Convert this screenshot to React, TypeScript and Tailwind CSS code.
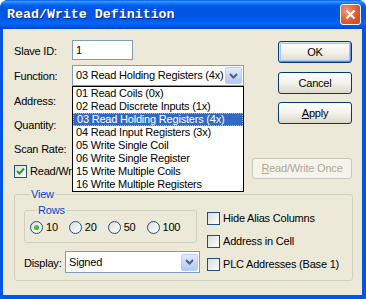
import React from 'react'

const functions = [
  '01 Read Coils (0x)',
  '02 Read Discrete Inputs (1x)',
  '03 Read Holding Registers (4x)',
  '04 Read Input Registers (3x)',
  '05 Write Single Coil',
  '06 Write Single Register',
  '15 Write Multiple Coils',
  '16 Write Multiple Registers',
]

function DropButton() {
  return (
    <div className="flex h-[17px] w-[17px] shrink-0 items-center justify-center rounded-[2px] border border-[#BACCF4] bg-gradient-to-b from-[#E2EBFE] to-[#B4C8F5]">
      <svg width="9" height="6" viewBox="0 0 9 6">
        <path d="M1 1 L4.5 4.5 L8 1" fill="none" stroke="#4D6185" strokeWidth="2" />
      </svg>
    </div>
  )
}

function Combo({ value, width, children }: { value: string; width: string; children?: React.ReactNode }) {
  return (
    <div className={`relative flex h-[21px] items-center justify-between border border-[#7F9DB9] bg-white pl-[3px] pr-[1px] ${width}`}>
      <span className="whitespace-nowrap">{value}</span>
      <DropButton />
      {children}
    </div>
  )
}

function Edit({ value = '', width = 'w-[61px]' }: { value?: string; width?: string }) {
  return <div className={`flex h-[20px] items-center border border-[#7F9DB9] bg-white pl-[3px] ${width}`}>{value}</div>
}

function XpButton({ children, def, disabled, className = '' }: { children: React.ReactNode; def?: boolean; disabled?: boolean; className?: string }) {
  if (disabled) {
    return (
      <div className={`flex h-[21px] items-center justify-center rounded-[3px] border border-[#C9C7BA] bg-[#F5F4EA] text-[#ACA899] ${className}`}>
        {children}
      </div>
    )
  }
  return (
    <div
      className={`flex h-[22px] items-center justify-center rounded-[3px] border border-[#003C74] bg-gradient-to-b from-white via-[#F3F2EC] to-[#DCD7CB] ${
        def ? 'shadow-[inset_1px_1px_0_#CEE7FF,inset_-1px_-1px_0_#6982EE,inset_0_0_0_2px_#A9C4F2]' : ''
      } ${className}`}
    >
      {children}
    </div>
  )
}

function Check({ checked, label }: { checked?: boolean; label: React.ReactNode }) {
  return (
    <div className="flex items-center gap-[3px] whitespace-nowrap">
      <div className="flex h-[13px] w-[13px] shrink-0 items-center justify-center border border-[#1C5180] bg-gradient-to-br from-[#DCDCD7] to-white">
        {checked && (
          <svg width="9" height="9" viewBox="0 0 9 9">
            <path d="M1 4 L3.5 6.5 L8 1.5" fill="none" stroke="#21A121" strokeWidth="2" />
          </svg>
        )}
      </div>
      <span>{label}</span>
    </div>
  )
}

function Radio({ checked, label }: { checked?: boolean; label: string }) {
  return (
    <div className="flex items-center gap-[3px]">
      <div className="flex h-[13px] w-[13px] shrink-0 items-center justify-center rounded-full border border-[#1C5180] bg-gradient-to-br from-[#DCDCD7] to-white">
        {checked && <div className="h-[5px] w-[5px] rounded-full bg-[radial-gradient(circle_at_40%_40%,#55D04E,#21A121)]" />}
      </div>
      <span>{label}</span>
    </div>
  )
}

export default function App() {
  return (
    <div className="h-[299px] w-[366px] bg-white">
      <div className="flex h-full w-full flex-col overflow-hidden rounded-t-[8px] bg-[#0055E5]">
        {/* Title bar */}
        <div className="flex h-[29px] items-center justify-between bg-[linear-gradient(to_bottom,#0058EE_0%,#3A93FF_5%,#288EFF_8%,#0E77FB_12%,#0262EE_18%,#0057E5_26%,#0055E3_50%,#005BF3_68%,#0365F8_80%,#0058E8_90%,#0046C0_100%)] pl-[7px] pr-[5px]">
          <span className="font-['Liberation_Mono',monospace] text-[13.3px] font-bold text-white [text-shadow:1px_1px_0_#0A2A8A]">
            Read/Write Definition
          </span>
          <div className="flex h-[21px] w-[21px] items-center justify-center rounded-[3px] border border-white bg-[radial-gradient(circle_at_30%_30%,#F0987A,#E05A31_55%,#C9431E)]">
            <svg width="11" height="11" viewBox="0 0 11 11">
              <path d="M1.5 1.5 L9.5 9.5 M9.5 1.5 L1.5 9.5" stroke="white" strokeWidth="2.2" />
            </svg>
          </div>
        </div>

        {/* Client area */}
        <div className="mb-[4px] ml-[3px] mr-[4px] flex-1 bg-[#ECE9D8] font-['Liberation_Sans',Arial,sans-serif] text-[11px] leading-[13px] tracking-[-0.2px] text-black">
          <div className="flex pl-[11px]">
            {/* Form fields */}
            <div className="flex w-[230px] flex-col">
              <div className="mt-[11px] flex h-[20px] items-center">
                <span className="w-[58px] pt-[2px]">Slave ID:</span>
                <Edit value="1" />
              </div>
              <div className="mt-[5px] flex h-[21px] items-center">
                <span className="w-[58px] pt-[2px]">Function:</span>
                <Combo value="03 Read Holding Registers (4x)" width="w-[172px]">
                  <div className="absolute left-[-1px] top-full z-10 mt-[1px] w-[172px] border border-black bg-white">
                    {functions.map((f, i) => (
                      <div
                        key={f}
                        className={`flex h-[13px] items-center whitespace-nowrap pl-[3px] ${
                          i === 2 ? 'border border-dotted border-[#E8B060] bg-[#316AC5] pl-[2px] text-white' : ''
                        }`}
                      >
                        {f}
                      </div>
                    ))}
                  </div>
                </Combo>
              </div>
              <div className="mt-[4px] flex h-[20px] items-center">
                <span className="w-[58px] pt-[2px]">Address:</span>
                <Edit width="w-[100px]" />
              </div>
              <div className="mt-[4px] flex h-[20px] items-center">
                <span className="w-[58px] pt-[2px]">Quantity:</span>
                <Edit width="w-[100px]" />
              </div>
              <div className="mt-[4px] flex h-[20px] items-center">
                <span className="w-[58px] pt-[2px]">Scan Rate:</span>
                <Edit width="w-[100px]" />
              </div>
              <div className="mt-[6px] flex h-[15px] items-center">
                <Check checked label="Read/Write" />
              </div>
            </div>

            {/* Buttons */}
            <div className="ml-[8px] flex w-[100px] flex-col items-end">
              <XpButton def className="mt-[12px] w-[74px]">OK</XpButton>
              <XpButton className="mt-[9px] w-[74px]">Cancel</XpButton>
              <XpButton className="mt-[8px] w-[74px]">
                <span>
                  <span className="underline">A</span>pply
                </span>
              </XpButton>
              <XpButton disabled className="mt-[34px] w-[100px]">
                <span className="whitespace-nowrap">
                  <span className="underline">R</span>ead/Write Once
                </span>
              </XpButton>
            </div>
          </div>

          {/* View group */}
          <fieldset className="ml-[11px] mt-[9px] w-[339px] min-w-0 rounded-[3px] border border-[#D0D0BF] pb-[7px] pl-[9px]">
            <legend className="ml-[6px] px-[1px] text-[#0046D5]">View</legend>
            <div className="flex">
              <div className="flex w-[176px] flex-col">
                <fieldset className="mt-[3px] w-[173px] min-w-0 rounded-[3px] border border-[#D0D0BF] pb-[8px] pl-[5px]">
                  <legend className="ml-[7px] px-[1px] text-[#0046D5]">Rows</legend>
                  <div className="mt-[4px] flex gap-[11px]">
                    <Radio checked label="10" />
                    <Radio label="20" />
                    <Radio label="50" />
                    <Radio label="100" />
                  </div>
                </fieldset>
                <div className="mt-[8px] flex h-[22px] items-center">
                  <span className="w-[41px] pt-[2px]">Display:</span>
                  <Combo value="Signed" width="w-[135px] h-[22px]" />
                </div>
              </div>
              <div className="ml-[7px] mt-[11px] flex flex-col gap-[10px]">
                <Check label="Hide Alias Columns" />
                <Check label="Address in Cell" />
                <Check label="PLC Addresses (Base 1)" />
              </div>
            </div>
          </fieldset>
        </div>
      </div>
    </div>
  )
}
